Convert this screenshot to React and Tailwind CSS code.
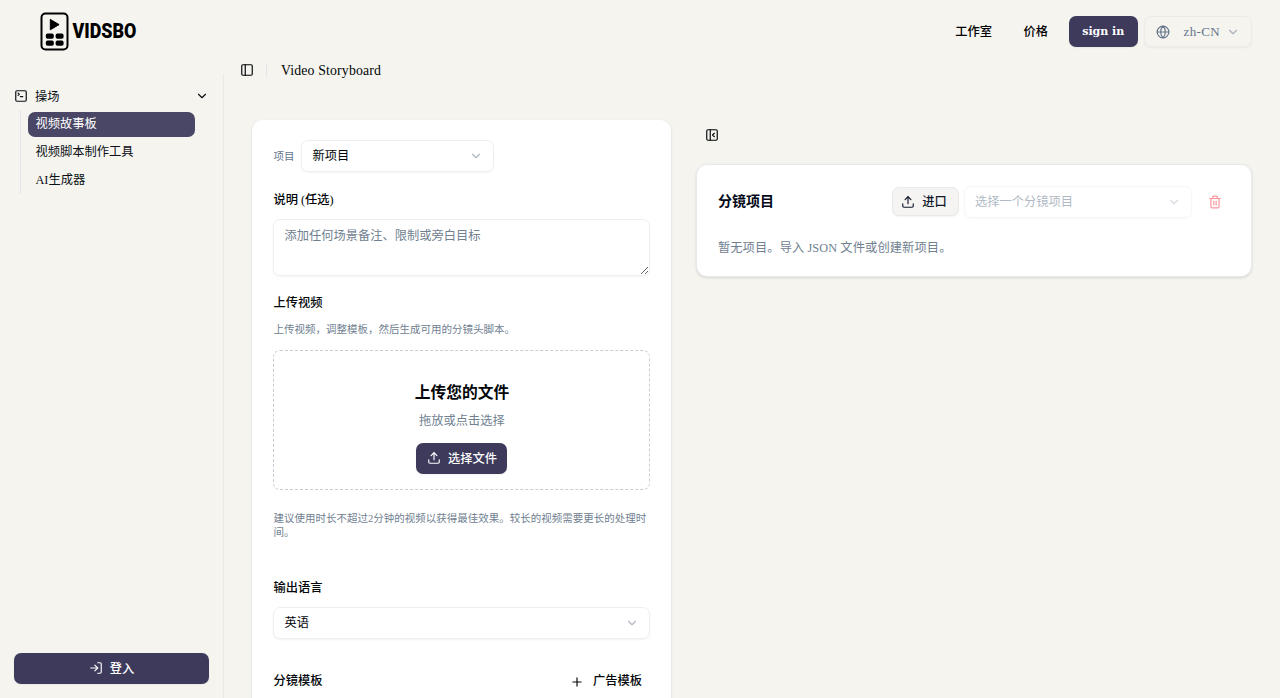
import { useState } from 'react'
import {
  ChevronDown,
  Globe,
  LogIn,
  PanelLeft,
  PanelLeftClose,
  Plus,
  SquareTerminal,
  Trash2,
  Upload,
} from 'lucide-react'
import clsx from 'clsx'

const NAV_ITEMS = ['视频故事板', '视频脚本制作工具', 'AI生成器']

function Logo() {
  return (
    <svg width="104" height="40" viewBox="0 0 104 40" className="block overflow-visible">
      <rect x="2.5" y="1.5" width="26" height="36" rx="4" fill="none" stroke="#000" strokeWidth="2" />
      <path d="M11.3 7.4v10.4l8.8-5.2z" fill="#000" stroke="#000" strokeWidth="1" strokeLinejoin="round" />
      <rect x="6.8" y="21.6" width="8" height="5.2" rx="1.8" />
      <rect x="16.6" y="21.6" width="8" height="5.2" rx="1.8" />
      <rect x="6.8" y="28.6" width="8" height="5.2" rx="1.8" />
      <rect x="16.6" y="28.6" width="8" height="5.2" rx="1.8" />
      <text
        x="33.4"
        y="25.6"
        textLength="64"
        lengthAdjust="spacingAndGlyphs"
        className="font-['Roboto',sans-serif] text-[21px] leading-none font-black"
      >
        VIDSBO
      </text>
    </svg>
  )
}

function Header() {
  return (
    <header className="flex h-[63px] shrink-0 items-center justify-between pr-[28px] pl-[39px]">
      <Logo />
      <div className="flex items-center">
        <nav className="flex items-center gap-[31.5px] pt-[2px] pr-[21px] text-sm font-medium text-black">
          <a href="#studio">工作室</a>
          <a href="#pricing">价格</a>
        </nav>
        <button className="h-9 w-[68.5px] rounded-md bg-[#3d3a5c] pt-px font-['DejaVu_Serif',serif] text-[11px] font-bold text-white shadow-xs">
          sign in
        </button>
        <button className="ml-[6px] flex h-9 w-[108.5px] items-center rounded-md border border-[#ebebe8] px-[11px] text-[13px] text-[#64748b] shadow-xs">
          <Globe className="size-4" />
          <span className="ml-[14px] tracking-[0.4px]">zh-CN</span>
          <ChevronDown className="ml-auto size-4 opacity-50" />
        </button>
      </div>
    </header>
  )
}

function Sidebar() {
  const [active, setActive] = useState(NAV_ITEMS[0])

  return (
    <aside className="flex w-64 shrink-0 flex-col justify-between border-r border-[#e9e9e6] text-sm">
      <div className="p-2">
        <button className="mt-[3px] flex h-7 w-full items-center gap-2 px-2 text-[#0a0f14]">
          <SquareTerminal className="size-4" />
          <span className="pt-[2px]">操场</span>
          <ChevronDown className="ml-auto size-4" />
        </button>
        <ul className="mt-0.5 ml-[13px] flex w-[188.5px] flex-col gap-1 border-l border-[#e2e5ea] py-0.5 pr-[13.5px] pl-[7px]">
          {NAV_ITEMS.map((item) => (
            <li key={item}>
              <button
                onClick={() => setActive(item)}
                className={clsx(
                  'flex h-7 w-full items-center rounded-md px-[7.5px]',
                  active === item ? 'bg-[#4a4766] text-white' : 'text-[#0a0f14]',
                )}
              >
                <span className="pt-px">{item}</span>
              </button>
            </li>
          ))}
        </ul>
      </div>
      <div className="px-[14px] pb-[14px]">
        <button className="flex h-9 w-full items-center justify-center gap-2 rounded-md bg-[#3d3a5c] font-medium text-white shadow-xs">
          <LogIn className="size-4" />
          <span className="pt-[2px]">登入</span>
        </button>
      </div>
    </aside>
  )
}

function Select({ value, className }) {
  return (
    <button
      className={clsx(
        'flex h-9 items-center justify-between rounded-md border border-[#efeff1] px-[10px] text-sm shadow-xs',
        className,
      )}
    >
      <span className="pt-px">{value}</span>
      <ChevronDown className="size-4 text-[#64748b] opacity-50" />
    </button>
  )
}

function StoryboardForm() {
  return (
    <section className="h-[640px] w-[419px] shrink-0 rounded-xl bg-white px-[21px] pt-[20.5px] shadow-sm">
      <div className="flex items-center gap-2">
        <span className="pt-[2px] text-xs text-[#64748b]">项目</span>
        <Select value="新项目" className="w-[193px]" />
      </div>

      <label className="mt-[20px] block text-sm font-medium" htmlFor="notes">
        说明 (任选)
      </label>
      <textarea
        id="notes"
        placeholder="添加任何场景备注、限制或旁白目标"
        className="mt-[10px] block h-[57px] w-full rounded-md border border-[#efeff1] px-[10px] py-[7.5px] text-sm shadow-xs outline-none placeholder:text-[#708090]"
      />

      <h3 className="mt-[19px] text-sm font-medium">上传视频</h3>
      <p className="mt-[10px] text-xs text-[#708090]">上传视频，调整模板，然后生成可用的分镜头脚本。</p>

      <div className="mt-[13px] flex h-[140px] flex-col items-center rounded-lg border border-dashed border-[#c9ccd4] pt-[30px]">
        <h4 className="text-lg font-semibold">上传您的文件</h4>
        <p className="mt-[8px] text-sm text-[#708090]">拖放或点击选择</p>
        <button className="mt-[12px] flex h-9 w-[91px] shrink-0 items-center justify-center gap-2 rounded-md bg-[#3d3a5c] text-sm font-medium text-white shadow-xs">
          <Upload className="size-4" />
          <span className="pt-[2px]">选择文件</span>
        </button>
      </div>

      <p className="mt-[22px] text-xs text-[#708090]">
        建议使用时长不超过2分钟的视频以获得最佳效果。较长的视频需要更长的处理时间。
      </p>

      <h3 className="mt-[40px] text-sm font-medium">输出语言</h3>
      <Select value="英语" className="mt-[10px] w-full" />

      <div className="mt-[29px] flex h-8 items-center justify-between text-sm font-medium">
        <h3>分镜模板</h3>
        <button className="flex items-center gap-[9px] pr-[8.5px]">
          <Plus className="size-4" />
          广告模板
        </button>
      </div>
    </section>
  )
}

function ProjectPanel() {
  return (
    <div className="min-w-0 flex-1 pt-[8.5px]">
      <button className="flex h-4 items-center pl-[9px]">
        <PanelLeftClose className="size-4" />
      </button>
      <section className="mt-[22px] h-[113px] rounded-xl border border-[#e9eaec] bg-white pr-[20px] pl-[20.5px] pt-[21px] shadow-sm">
        <div className="flex items-center">
          <h2 className="text-base font-bold text-[#020817]">分镜项目</h2>
          <button className="ml-auto flex h-[29px] w-[67px] items-center justify-center gap-2 rounded-md border border-[#e9e9e9] bg-[#f5f4f2] pr-[3px] text-sm font-medium text-[#0f172a] shadow-xs">
            <Upload className="size-4" />
            <span className="pt-px">进口</span>
          </button>
          <Select value="选择一个分镜项目" className="ml-[5px] w-[228px] text-[#64748b] opacity-50" />
          <button className="mr-[9px] ml-[16px] text-red-500 opacity-50">
            <Trash2 className="size-4" />
          </button>
        </div>
        <p className="mt-[22px] text-sm tracking-[0.1px] text-[#708090]">
          暂无项目。导入 JSON 文件或创建新项目。
        </p>
      </section>
    </div>
  )
}

export default function App() {
  // compact theme: every step of the scale is sized from a 14px base
  return (
    <div className="flex h-[698px] flex-col overflow-hidden bg-[#f5f4ef] font-['Liberation_Serif','Noto_Sans_CJK_SC',serif] text-[#020608] [--radius-lg:7px] [--radius-md:7px] [--radius-xl:11px] [--spacing:3.5px] [--text-base:14px] [--text-lg:15.75px] [--text-sm:12.25px] [--text-xs:10.5px]">
      <Header />
      <div className="flex min-h-0 flex-1">
        <div className="flex pt-[11px]">
          <Sidebar />
        </div>
        <main className="min-w-0 flex-1">
          <div className="flex h-[14px] items-center pl-4">
            <PanelLeft className="ml-[2px] size-4" />
            <span className="ml-[12px] h-[14px] w-px bg-[#e2e5ea]" />
            <h1 className="ml-[14px] pt-[2px] text-[13.8px] font-medium tracking-[0.15px]">Video Storyboard</h1>
          </div>
          <div className="flex items-start gap-[25px] pt-[42.5px] pr-[28px] pl-[28.4px]">
            <StoryboardForm />
            <ProjectPanel />
          </div>
        </main>
      </div>
    </div>
  )
}
